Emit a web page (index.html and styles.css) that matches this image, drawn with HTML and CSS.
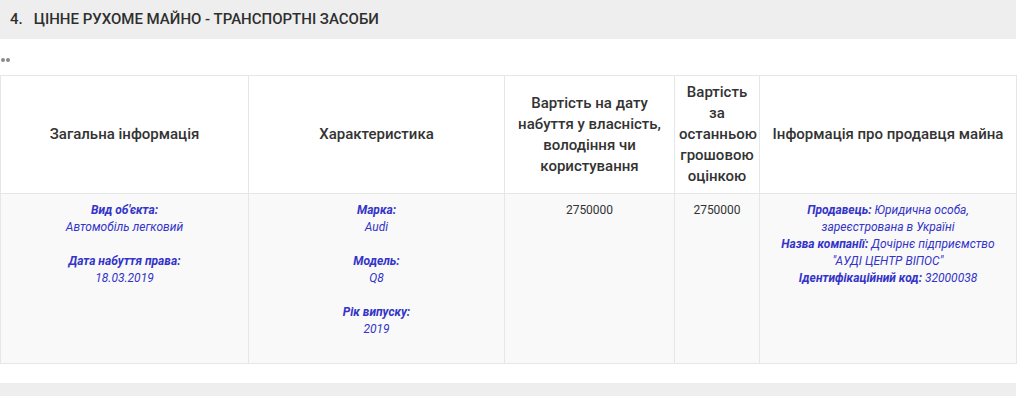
FILE: index.html
```html
<!DOCTYPE html>
<html lang="uk">
<head>
<meta charset="utf-8">
<link rel="stylesheet" href="styles.css">
</head>
<body>
<div class="page">
  <div class="section-head"><span class="num">4.</span>ЦІННЕ РУХОМЕ МАЙНО - ТРАНСПОРТНІ ЗАСОБИ</div>
  <div class="note"><span class="dot"></span><span class="dot"></span></div>
  <table class="assets">
    <colgroup>
      <col class="c1"><col class="c2"><col class="c3"><col class="c4"><col class="c5">
    </colgroup>
    <thead>
      <tr>
        <th>Загальна інформація</th>
        <th>Характеристика</th>
        <th>Вартість на дату набуття у власність, володіння чи користування</th>
        <th class="narrow">Вартість за останньою грошовою оцінкою</th>
        <th>Інформація про продавця майна</th>
      </tr>
    </thead>
    <tbody>
      <tr>
        <td class="info"><b>Вид об'єкта:</b><br>Автомобіль легковий<br><br><b>Дата набуття права:</b><br>18.03.2019<br></td>
        <td class="info"><b>Марка:</b><br>Audi<br><br><b>Модель:</b><br>Q8<br><br><b>Рік випуску:</b><br>2019<br><br></td>
        <td class="num-cell">2750000</td>
        <td class="num-cell">2750000</td>
        <td class="info"><b>Продавець:</b> Юридична особа, зареєстрована в Україні<br><b>Назва компанії:</b> Дочірнє підприємство "АУДІ ЦЕНТР ВІПОС"<br><b>Ідентифікаційний код:</b> 32000038</td>
      </tr>
    </tbody>
  </table>
  <div class="section-next"></div>
</div>
</body>
</html>
```

FILE: styles.css
```css
html, body {
  margin: 0;
  padding: 0;
  background: #ffffff;
  font-family: Roboto, "Noto Sans", "Liberation Sans", sans-serif;
  color: #333333;
}

.page {
  width: 1016px;
}

.section-head {
  height: 39px;
  line-height: 39px;
  background: #eeeeee;
  padding-left: 10px;
  font-size: 15px;
  font-weight: 500;
  color: #2f2f2f;
}

.section-head .num {
  display: inline-block;
  margin-right: 11px;
}

.note {
  height: 36px;
  display: flex;
  align-items: center;
  gap: 1px;
  padding-left: 1px;
  box-sizing: border-box;
  padding-top: 5px;
}

.note .dot {
  width: 4px;
  height: 4px;
  border-radius: 50%;
  background: #8a8a8a;
}

.assets {
  width: 1016px;
  border-collapse: collapse;
  table-layout: fixed;
}

.assets col.c1 { width: 248px; }
.assets col.c2 { width: 256px; }
.assets col.c3 { width: 170px; }
.assets col.c4 { width: 85px; }
.assets col.c5 { width: 257px; }

.assets th,
.assets td {
  border: 1px solid #e6e6e6;
  text-align: center;
}

.assets th {
  height: 105px;
  padding: 6px 5px;
  font-size: 15px;
  line-height: 21px;
  font-weight: 500;
  color: #333333;
  background: #ffffff;
}

.assets th.narrow {
  padding: 6px 4px;
}

.assets td {
  background: #f9f9f9;
  vertical-align: top;
  padding: 8px 10px;
  font-size: 12px;
  line-height: 17px;
}

.assets td.info {
  font-style: italic;
  color: #3434c8;
}

.assets td.info b {
  font-weight: 700;
}

.assets td.num-cell {
  color: #333333;
}

.section-next {
  margin-top: 19px;
  height: 14px;
  background: #eeeeee;
}
```
